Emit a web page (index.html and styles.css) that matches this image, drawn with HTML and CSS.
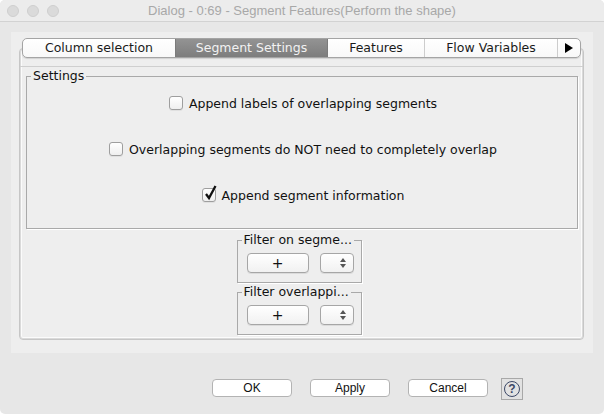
FILE: index.html
```html
<!DOCTYPE html>
<html>
<head>
<meta charset="utf-8">
<title>Dialog</title>
<link rel="stylesheet" href="styles.css">
</head>
<body>
<div class="window">
  <div class="titlebar">
    <div class="lights"><span></span><span></span><span></span></div>
    <div class="title">Dialog - 0:69 - Segment Features(Perform the shape)</div>
    <div></div>
  </div>
  <div class="panel">
    <div class="tabs">
      <div class="tab t1">Column selection</div>
      <div class="tab t2 sel">Segment Settings</div>
      <div class="tab t3">Features</div>
      <div class="tab t4">Flow Variables</div>
      <div class="tab t5"><svg width="8" height="10" viewBox="0 0 8 10"><path d="M0 0 L8 5 L0 10 Z" fill="#000"/></svg></div>
    </div>
    <div class="frame">
      <div class="inner">
        <fieldset class="settings">
          <legend>Settings</legend>
          <div class="row"><span class="cb"></span><span>Append labels of overlapping segments</span></div>
          <div class="row"><span class="cb"></span><span>Overlapping segments do NOT need to completely overlap</span></div>
          <div class="row"><span class="cb"><svg class="check" width="14" height="16" viewBox="0 0 14 16"><path d="M3 9 L6 13 L12.5 1" fill="none" stroke="#111" stroke-width="2.3" stroke-linejoin="miter"/></svg></span><span>Append segment information</span></div>
        </fieldset>
        <div class="filters">
          <fieldset class="fgroup">
            <legend>Filter on segme...</legend>
            <div class="brow"><span class="gbtn plus">+</span><span class="gbtn spin"><svg width="6" height="10" viewBox="0 0 6 10"><path d="M3 0 L6 4 L0 4 Z M0 6 L6 6 L3 10 Z" fill="#555"/></svg></span></div>
          </fieldset>
          <fieldset class="fgroup second">
            <legend>Filter overlappi...</legend>
            <div class="brow"><span class="gbtn plus">+</span><span class="gbtn spin"><svg width="6" height="10" viewBox="0 0 6 10"><path d="M3 0 L6 4 L0 4 Z M0 6 L6 6 L3 10 Z" fill="#555"/></svg></span></div>
          </fieldset>
        </div>
      </div>
    </div>
  </div>
  <div class="actions">
    <span class="btn">OK</span>
    <span class="btn">Apply</span>
    <span class="btn">Cancel</span>
    <span class="help"><span class="qm">?</span></span>
  </div>
</div>
</body>
</html>
```
FILE: styles.css
```css
* { box-sizing: border-box; }
html, body { margin: 0; padding: 0; background: #ffffff; }
body {
  width: 604px;
  height: 414px;
  overflow: hidden;
  font-family: "DejaVu Sans", "Open Sans", sans-serif;
  font-size: 12.5px;
  color: #111;
}
.window {
  width: 604px;
  height: 414px;
  background: #e7e7e7;
  border-radius: 5px;
  overflow: hidden;
  display: flex;
  flex-direction: column;
}
.titlebar {
  height: 22px;
  flex: none;
  display: grid;
  grid-template-columns: 1fr auto 1fr;
  align-items: center;
  background: #ececec;
  border-bottom: 1px solid #d2d2d2;
}
.lights { display: flex; gap: 8px; padding-left: 7px; }
.lights span {
  width: 12px; height: 12px; border-radius: 50%;
  background: #dadada; border: 1px solid #cecece;
}
.title {
  font-family: "Liberation Sans", Arial, sans-serif;
  font-size: 13px;
  color: #a8a8a8;
}
.panel {
  margin: 10px 11px 0;
  height: 321px;
  flex: none;
  background: #eeeeee;
  padding: 6px 9px 0 8px;
}
.tabs {
  display: flex;
  height: 20px;
  margin: 0 3px;
  position: relative;
  z-index: 1;
  border: 1px solid #a4a4a4;
  border-radius: 5px;
  overflow: hidden;
  background: linear-gradient(#ffffff, #f8f8f8);
  box-shadow: 0 1px 1px rgba(0,0,0,0.12);
}
.tab {
  display: flex;
  align-items: center;
  justify-content: center;
  border-left: 1px solid #cdcdcd;
  color: #1a1a1a;
  line-height: 1;
}
.t1 { width: 152px; border-left: none; }
.t2 { width: 153px; }
.t3 { width: 96px; }
.t4 { width: 133px; }
.t5 { flex: 1; }
.tab.sel {
  background: linear-gradient(#939393, #7d7d7d);
  color: #f2f2f2;
  border-left: 1px solid #7b7b7b;
  border-right: 1px solid #7b7b7b;
}
.tab.sel + .tab { border-left: none; }
.frame {
  margin-top: -10px;
  height: 292px;
  border: 1px solid #c6c6c6;
  border-radius: 4px;
  box-shadow: inset 0 0 0 1px #dadada, inset 0 0 0 2px #fbfbfb;
  padding-top: 17px;
}
.inner {
  border-top: 1px solid #cfcfcf;
  padding: 0 5px 0 6px;
}
fieldset { margin: 0; min-width: 0; }
legend { padding: 0 2px; line-height: 14px; white-space: nowrap; }
.settings {
  margin-top: 2px;
  height: 160px;
  border: 1px solid #a9a9a9;
  box-shadow: 1px 1px 0 #ffffff;
  padding: 10px 0 0;
  display: flex;
  flex-direction: column;
  align-items: center;
  gap: 26px;
}
.settings legend { margin-left: 4px; }
.row {
  height: 20px;
  display: flex;
  align-items: center;
  gap: 6px;
  padding-left: 2px;
}
.cb {
  position: relative;
  width: 14px; height: 14px;
  border: 1px solid #9e9e9e;
  border-radius: 3px;
  background: linear-gradient(#ffffff, #efefef);
  box-shadow: 0 1px 0 rgba(0,0,0,0.06);
}
.check { position: absolute; left: 0; top: -4px; overflow: visible; }
.filters {
  display: flex;
  flex-direction: column;
  align-items: center;
  padding-right: 6px;
}
.fgroup {
  width: 125px;
  height: 50px;
  margin-top: 4px;
  border: 1px solid #a9a9a9;
  box-shadow: 1px 1px 0 #ffffff;
  padding: 6px 6px 0 9px;
}
.fgroup.second { margin-top: 2px; }
.fgroup legend { margin-left: -5px; }
.brow { display: flex; gap: 11px; }
.gbtn {
  height: 20px;
  display: flex;
  align-items: center;
  border: 1px solid #a6a6a6;
  border-radius: 4px;
  background: linear-gradient(#ffffff, #f1f1f1);
  box-shadow: 0 1px 0 rgba(0,0,0,0.08);
}
.plus { width: 62px; justify-content: center; font-size: 14px; }
.spin { width: 34px; justify-content: flex-end; padding-right: 7px; }
.actions {
  display: flex;
  align-items: flex-start;
  margin-top: 25px;
  padding-left: 212px;
  font-family: "Liberation Sans", Arial, sans-serif;
  font-size: 12px;
}
.btn {
  width: 80px;
  height: 18px;
  margin-top: 1px;
  margin-right: 18px;
  display: flex;
  align-items: center;
  justify-content: center;
  background: #ffffff;
  border: 1px solid #b3b3b3;
  border-radius: 4px;
  color: #111;
}
.btn:nth-child(3) { margin-right: 13px; }
.help {
  width: 22px;
  height: 22px;
  display: flex;
  align-items: center;
  justify-content: center;
  border: 1px solid #a8a8a8;
  background: #e2e2e2;
}
.qm {
  width: 16px;
  height: 16px;
  border-radius: 50%;
  border: 1.5px solid #3b4766;
  color: #3b4766;
  font-size: 12px;
  font-weight: bold;
  display: flex;
  align-items: center;
  justify-content: center;
  line-height: 1;
}
```
